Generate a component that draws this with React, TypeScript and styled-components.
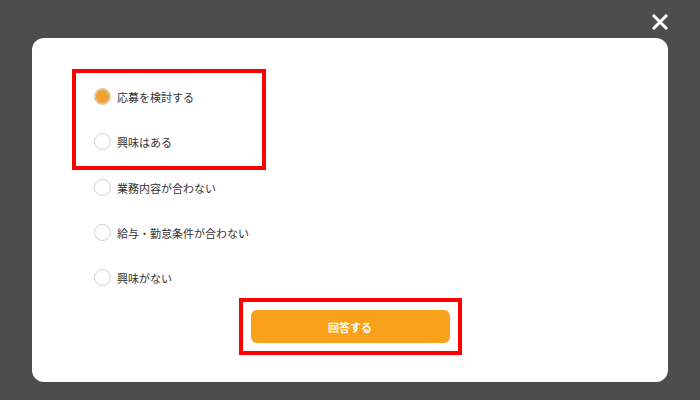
import React, { useState } from "react";
import styled, { createGlobalStyle } from "styled-components";

const GlobalStyle = createGlobalStyle`
  html, body {
    margin: 0;
    padding: 0;
    background: #4d4d4d;
    font-family: "Noto Sans CJK JP", "Noto Sans", sans-serif;
  }
`;

const options = [
  "応募を検討する",
  "興味はある",
  "業務内容が合わない",
  "給与・勤怠条件が合わない",
  "興味がない",
];

export default function App() {
  const [selected, setSelected] = useState(0);

  const renderOption = (label: string, i: number) => (
    <OptionRow key={label} onClick={() => setSelected(i)}>
      <RadioCircle $checked={selected === i} />
      <OptionLabel>{label}</OptionLabel>
    </OptionRow>
  );

  return (
    <Page>
      <GlobalStyle />
      <Header>
        <CloseButton aria-label="close">
          <svg width="16" height="16" viewBox="0 0 16 16">
            <path
              d="M2 2 L14 14 M14 2 L2 14"
              stroke="#fff"
              strokeWidth="3"
              strokeLinecap="square"
            />
          </svg>
        </CloseButton>
      </Header>
      <Modal>
        <HighlightGroup>{options.slice(0, 2).map((o, i) => renderOption(o, i))}</HighlightGroup>
        <OptionList>{options.slice(2).map((o, i) => renderOption(o, i + 2))}</OptionList>
        <ButtonFrame>
          <SubmitButton>回答する</SubmitButton>
        </ButtonFrame>
      </Modal>
    </Page>
  );
}

const Page = styled.div`
  width: 700px;
  height: 400px;
  box-sizing: border-box;
  padding: 0 32px;
  display: flex;
  flex-direction: column;
`;

const Header = styled.div`
  height: 38px;
  display: flex;
  justify-content: flex-end;
  align-items: flex-start;
  padding-top: 12px;
  box-sizing: border-box;
`;

const CloseButton = styled.button`
  width: 20px;
  height: 20px;
  margin-right: -2px;
  padding: 0;
  border: none;
  background: none;
  display: flex;
  align-items: center;
  justify-content: center;
  cursor: pointer;
`;

const Modal = styled.div`
  height: 344px;
  box-sizing: border-box;
  background: #fff;
  border-radius: 12px;
  padding: 31px 40px 0;
  display: flex;
  flex-direction: column;
`;

const HighlightGroup = styled.div`
  width: 194px;
  box-sizing: border-box;
  border: 4px solid #ff0000;
  padding: 1px 0 2px 18px;
`;

const OptionList = styled.div`
  margin-top: -5px;
  padding-left: 22px;
`;

const OptionRow = styled.label`
  height: 45px;
  display: flex;
  align-items: center;
  gap: 6px;
  cursor: pointer;
`;

const RadioCircle = styled.span<{ $checked: boolean }>`
  width: 17px;
  height: 17px;
  box-sizing: border-box;
  border-radius: 50%;
  border: 1px solid #cfcfcf;
  background: ${(p) => (p.$checked ? "#efa136" : "#fff")};
  box-shadow: ${(p) => (p.$checked ? "inset 0 0 0 1px #f7c890" : "none")};
`;

const OptionLabel = styled.span`
  font-size: 11px;
  color: #333;
`;

const ButtonFrame = styled.div`
  align-self: center;
  margin-top: -2px;
  border: 4px solid #ff0000;
  padding: 8px;
`;

const SubmitButton = styled.button`
  width: 199px;
  height: 33px;
  border: none;
  border-radius: 6px;
  background: #f9a11b;
  color: #fff;
  font-family: "Noto Sans CJK JP", "Noto Sans", sans-serif;
  font-size: 11px;
  font-weight: bold;
  display: flex;
  align-items: center;
  justify-content: center;
  cursor: pointer;
`;
